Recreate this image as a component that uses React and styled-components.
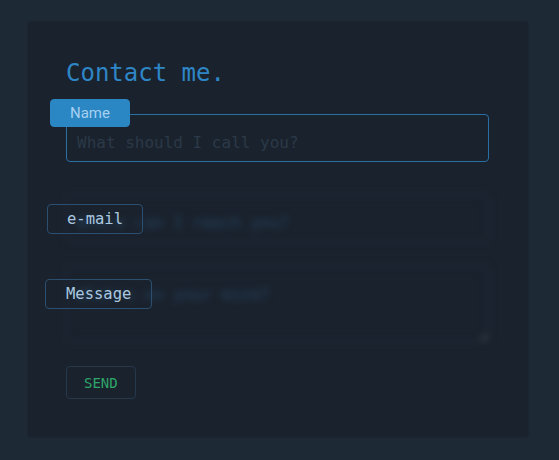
import { useState } from "react"
import styled, { createGlobalStyle } from "styled-components"

const GlobalStyle = createGlobalStyle`
html, body {
  margin: 0;
  padding: 0;
  background: #1e2936;
  min-height: 100%;
}
* { box-sizing: border-box; }
`

const Page = styled.div`
padding: 22px 0 0 28px;
min-height: 460px;
background: #1e2936;`

const Card = styled.form`
width: 500px;
height: 415px;
background: #1a222d;
border-radius: 3px;
box-shadow: 0 0 2px rgba(0,0,0,0.3);
padding: 37px 39px 0 38px;
display: flex;
flex-direction: column;`

const Title = styled.h1`
margin: 0 0 27px 0;
font-family: "DejaVu Sans Mono", monospace;
font-weight: 400;
font-size: 24px;
line-height: 28px;
color: #2e86c6;`

const Field = styled.div`
position: relative;
margin-bottom: ${props => props.gap}px;`

const Input = styled.input`
display: block;
width: 100%;
height: 48px;
padding: 8px 10px 0 10px;
background: transparent;
border: 1px solid ${props => props.focused ? "#2a6fa4" : "#202f3e"};
border-radius: 4px;
outline: none;
font-family: "DejaVu Sans Mono", monospace;
font-size: 16px;
color: #b8d4ea;
caret-color: #9fb6c9;
filter: ${props => props.focused ? "none" : "blur(3.5px)"};
&::placeholder { color: ${props => props.focused ? "#2b3948" : "#25435f"}; }`

const TextArea = styled.textarea`
display: block;
width: 100%;
height: 77px;
padding: 19px 10px 0 10px;
background: transparent;
border: 1px solid #202f3e;
border-radius: 4px;
outline: none;
resize: vertical;
font-family: "DejaVu Sans Mono", monospace;
font-size: 16px;
color: #b8d4ea;
filter: blur(3.5px);
&::placeholder { color: #25435f; }`

const Label = styled.label`
position: absolute;
left: ${props => props.left}px;
top: ${props => props.top}px;
height: ${props => props.active ? 28 : 30}px;
padding: 0 ${props => props.padX}px;
display: flex;
align-items: center;
border-radius: 4px;
background: ${props => props.active ? "#2b87c4" : "transparent"};
border: 1px solid ${props => props.active ? "#2b87c4" : "#2a4f70"};
color: ${props => props.active ? "#a6d0f0" : "#a9c8e0"};
font-family: ${props => props.active ? 'Roboto, "Noto Sans", sans-serif' : '"DejaVu Sans Mono", monospace'};
font-size: ${props => props.active ? 15 : 15.5}px;
cursor: text;`

const SendButton = styled.button`
align-self: flex-start;
height: 33px;
padding: 0 17px;
background: transparent;
border: 1px solid #26384b;
border-radius: 4px;
color: #2fa66a;
font-family: "DejaVu Sans Mono", monospace;
font-size: 14px;
cursor: pointer;`

const App = () => {
  const [focus, setFocus] = useState("name")

  return (
    <Page>
      <GlobalStyle />
      <Card onSubmit={e => e.preventDefault()}>
        <Title>Contact me.</Title>

        <Field gap={32}>
          <Input
            id="name"
            autoFocus
            focused={focus === "name"}
            onFocus={() => setFocus("name")}
            placeholder="What should I call you?"
          />
          <Label htmlFor="name" active left={-16} top={-15} padX={19}>Name</Label>
        </Field>

        <Field gap={23}>
          <Input
            id="email"
            focused={focus === "email"}
            onFocus={() => setFocus("email")}
            placeholder="Where can I reach you?"
          />
          <Label htmlFor="email" left={-19} top={10} padX={19}>e-mail</Label>
        </Field>

        <Field gap={24}>
          <TextArea id="message" placeholder="What's on your mind?" />
          <Label htmlFor="message" left={-21} top={14} padX={20}>Message</Label>
        </Field>

        <SendButton type="submit">SEND</SendButton>
      </Card>
    </Page>
  )
}

export default App
